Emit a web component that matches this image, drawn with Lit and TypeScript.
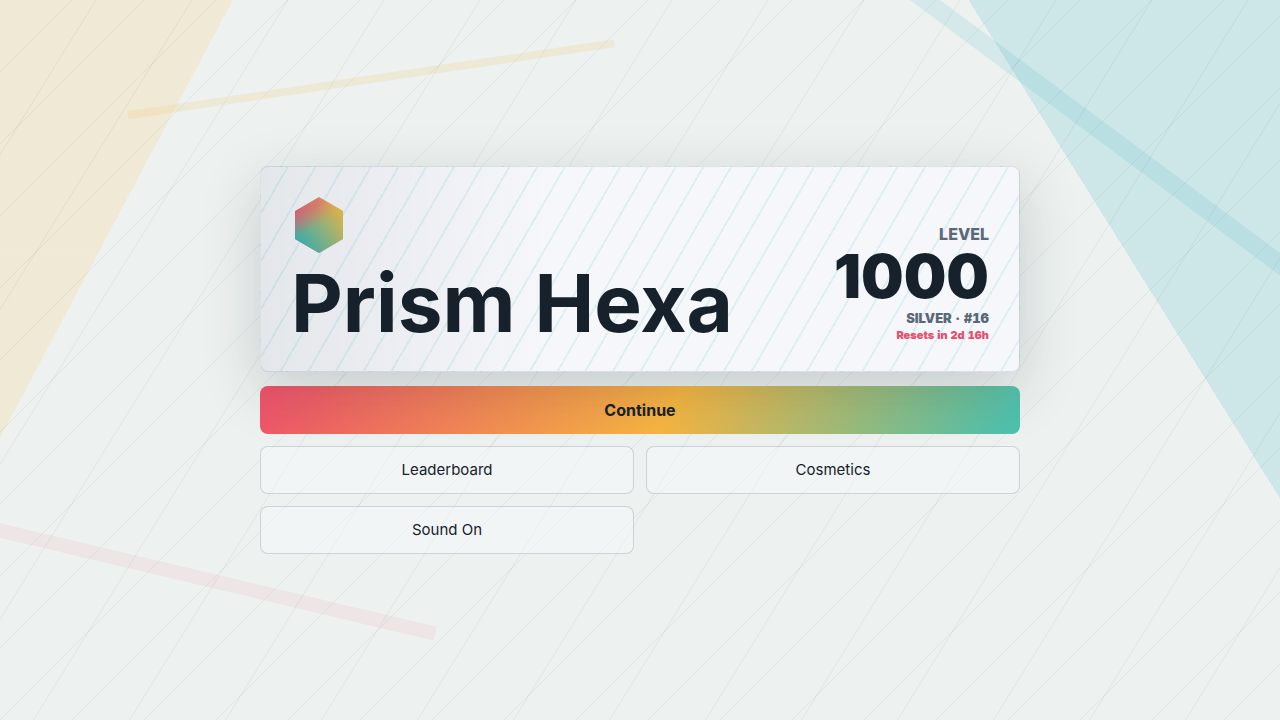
import { LitElement, html, svg, css } from "lit";
import { customElement, state } from "lit/decorators.js";

const REACH = 4000;
const STEEP_STEP = 96;
const DIAGONAL_STEP = 72;

@customElement("prism-backdrop")
class PrismBackdrop extends LitElement {
  static styles = css`
    :host {
      display: block;
      background:
        linear-gradient(118deg, rgba(255, 183, 51, 0.14) 0 14%, transparent 14%),
        linear-gradient(238deg, rgba(24, 168, 188, 0.15) 0 18%, transparent 18%),
        #edf2f0;
    }
    .art {
      display: block;
      width: 100%;
      height: 100%;
    }
    .grid {
      stroke: rgba(23, 33, 43, 0.06);
      stroke-width: 1;
    }
    .gold {
      stroke: rgba(245, 182, 66, 0.14);
      stroke-width: 8;
    }
    .rose {
      stroke: rgba(239, 71, 111, 0.08);
      stroke-width: 14;
    }
    .teal {
      stroke: rgba(24, 168, 188, 0.11);
      stroke-width: 18;
    }
  `;

  render() {
    const steep = Array.from({ length: 50 }, (_, i) => i * STEEP_STEP);
    const diagonal = Array.from({ length: 70 }, (_, i) => i * DIAGONAL_STEP);
    return html`
      <svg class="art" aria-hidden="true">
        <g class="grid">
          ${steep.map((x) => svg`<line x1=${x} y1="0" x2=${x - REACH * 0.62} y2=${REACH} />`)}
          ${diagonal.map((x) => svg`<line x1=${x} y1="0" x2=${x - REACH} y2=${REACH} />`)}
        </g>
        <line class="teal" x1="70%" y1="-3%" x2="104%" y2="42%" />
        <line class="rose" x1="-4%" y1="72%" x2="34%" y2="88%" />
        <line class="gold" x1="10%" y1="16%" x2="48%" y2="6%" />
      </svg>
    `;
  }
}

@customElement("app-root")
class AppRoot extends LitElement {
  static styles = css`
    :host {
      --ink: #17212b;
      --muted: #5a6877;
      display: grid;
      position: relative;
      min-height: 100vh;
      place-items: center;
      overflow: hidden;
      color: var(--ink);
      font-family: Inter, "Liberation Sans", sans-serif;
    }
    * {
      box-sizing: border-box;
    }
    .backdrop {
      position: absolute;
      inset: 0;
    }
    .menu {
      position: relative;
      display: grid;
      gap: 14px;
      width: min(760px, 100% - 32px);
    }
    .hero {
      position: relative;
      z-index: 1;
      display: flex;
      align-items: flex-end;
      justify-content: space-between;
      gap: 24px;
      padding: 28px 30px;
      border: 1px solid rgba(23, 33, 43, 0.1);
      border-radius: 8px;
      background:
        linear-gradient(90deg, rgba(23, 33, 43, 0.08), rgba(23, 33, 43, 0) 38%),
        repeating-linear-gradient(120deg, transparent 0 22px, rgba(24, 168, 188, 0.1) 22px 24px),
        #f5f7fb;
      box-shadow: 0 18px 60px rgba(23, 33, 43, 0.18);
    }
    .brand {
      display: grid;
      gap: 10px;
    }
    .logo {
      display: block;
      width: 56px;
      height: 58px;
    }
    .title {
      margin: 0;
      font-size: 80px;
      font-weight: 700;
      line-height: 80px;
    }
    .rank {
      display: grid;
      justify-items: end;
      text-align: right;
    }
    .label {
      color: var(--muted);
      font-size: 16px;
      font-weight: 800;
      line-height: 18px;
    }
    .score {
      font-size: 60px;
      font-weight: 900;
      line-height: 66px;
    }
    .tier {
      color: var(--muted);
      font-size: 13px;
      font-weight: 900;
      line-height: 18px;
    }
    .reset {
      color: #e94f6b;
      font-size: 11px;
      font-weight: 900;
      line-height: 16px;
    }
    .tier,
    .reset {
      font-variant-numeric: tabular-nums;
    }
    .actions {
      display: grid;
      grid-template-columns: 1fr 1fr;
      gap: 12px;
    }
    .button {
      min-height: 48px;
      padding: 0 16px;
      border: 1px solid rgba(23, 33, 43, 0.16);
      border-radius: 8px;
      background: rgba(245, 248, 252, 0.5);
      color: inherit;
      font-family: inherit;
      font-size: 15px;
      line-height: 20px;
      cursor: pointer;
    }
    .primary {
      grid-column: 1 / -1;
      border: 0;
      background: linear-gradient(120deg, #ee526c, #f7b642 54%, #48c2b2);
      font-size: 16px;
      font-weight: 700;
    }
  `;

  @state() private sound = true;

  render() {
    return html`
      <prism-backdrop class="backdrop"></prism-backdrop>
      <main class="menu">
        <section class="hero">
          <div class="brand">
            <svg class="logo" viewBox="0 -2 56 58" aria-hidden="true">
              <defs>
                <linearGradient id="warm" gradientUnits="userSpaceOnUse" x1="4" y1="0" x2="52" y2="0">
                  <stop offset="0" stop-color="#c86676" />
                  <stop offset="0.5" stop-color="#d4806a" />
                  <stop offset="1" stop-color="#dcb648" />
                </linearGradient>
                <linearGradient id="cool" gradientUnits="userSpaceOnUse" x1="8" y1="46" x2="48" y2="18">
                  <stop offset="0" stop-color="#3cabaa" />
                  <stop offset="0.5" stop-color="#82b082" />
                  <stop offset="1" stop-color="#d0b352" />
                </linearGradient>
                <linearGradient id="fade" gradientUnits="userSpaceOnUse" x1="18" y1="12" x2="27" y2="30">
                  <stop offset="0" stop-color="#000" />
                  <stop offset="1" stop-color="#fff" />
                </linearGradient>
                <mask id="lower" maskUnits="userSpaceOnUse" x="0" y="0" width="56" height="58">
                  <rect width="56" height="58" fill="url(#fade)" />
                </mask>
              </defs>
              <path fill="url(#warm)" d="M28 0 52 14V42L28 56 4 42V14Z" />
              <path fill="url(#cool)" mask="url(#lower)" d="M28 0 52 14V42L28 56 4 42V14Z" />
            </svg>
            <h1 class="title">Prism Hexa</h1>
          </div>
          <div class="rank">
            <span class="label">LEVEL</span>
            <strong class="score">1000</strong>
            <span class="tier">SILVER · #16</span>
            <span class="reset">Resets in 2d 16h</span>
          </div>
        </section>
        <nav class="actions" aria-label="Main menu">
          <button class="button primary" type="button">Continue</button>
          <button class="button" type="button">Leaderboard</button>
          <button class="button" type="button">Cosmetics</button>
          <button class="button" type="button" @click=${() => (this.sound = !this.sound)}>
            ${this.sound ? "Sound On" : "Sound Off"}
          </button>
        </nav>
      </main>
    `;
  }
}
